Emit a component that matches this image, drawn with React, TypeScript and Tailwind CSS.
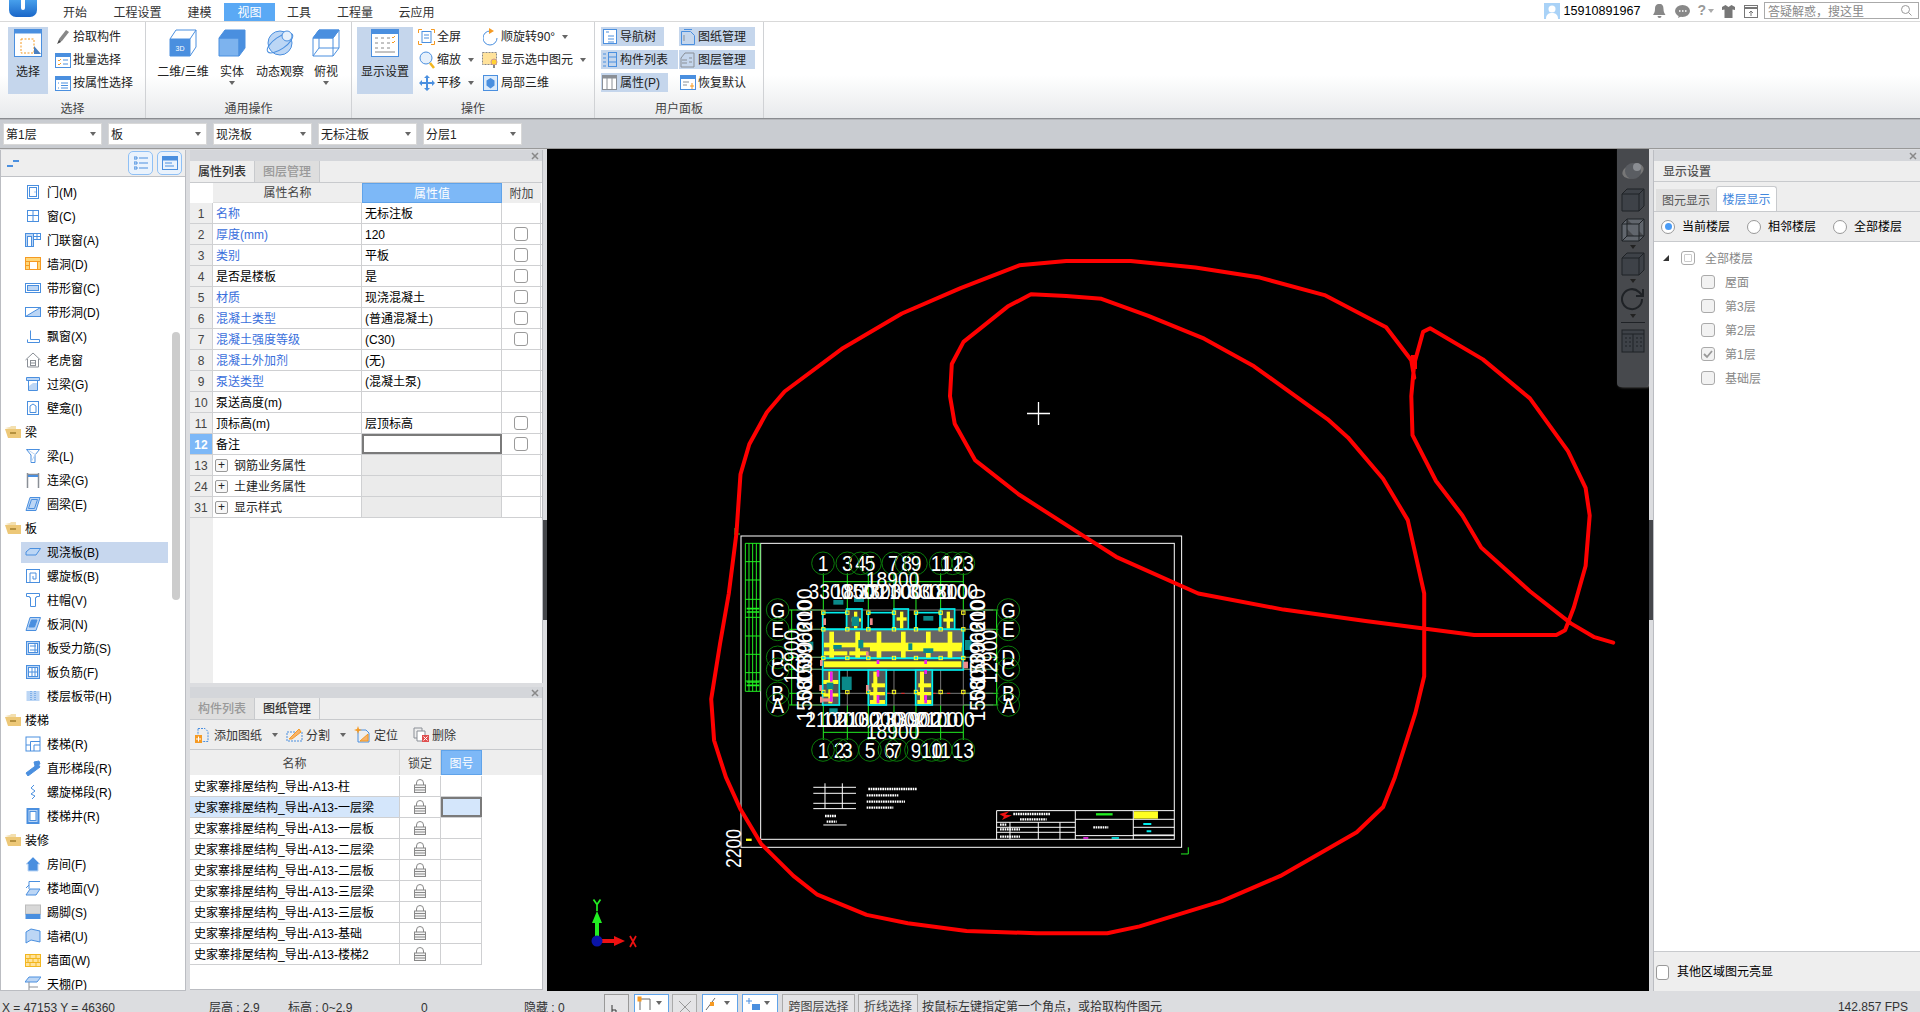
import React from "react";

const B = "#4a8fdf";
const L = "#bcd6f5";
const O = "#f59a23";
const G = "#8a8f96";

function S({ s = 16, vb = "0 0 16 16", children }: { s?: number; vb?: string; children?: React.ReactNode }) {
  return (
    <svg width={s} height={s} viewBox={vb} fill="none" stroke={B} strokeWidth="1" className="shrink-0">
      {children}
    </svg>
  );
}

const navIcons: Record<string, React.ReactNode> = {
  door: <><rect x="2.5" y="1.5" width="11" height="13" /><rect x="4.5" y="3.5" width="7" height="9" /><path d="M9.5 8h1" /></>,
  win: <><rect x="2.5" y="2.5" width="11" height="11" /><path d="M8 2.5v11M2.5 7.5h11" /></>,
  doorwin: <><rect x="0.5" y="1.5" width="8" height="13" fill={L} /><rect x="2.5" y="4.5" width="4" height="10" fill="#fff" /><rect x="8.5" y="1.5" width="7" height="6" /><path d="M12 1.5v6M8.5 4.5h7" /></>,
  hole: <><rect x="0.5" y="1.5" width="15" height="12" fill="#ffd778" stroke={O} /><rect x="4.5" y="5.5" width="8" height="8" fill="#fff" stroke={O} /><path d="M0.5 5.5h15M0.5 9.5h4" stroke={O} /></>,
  strip: <><rect x="0.5" y="3.5" width="15" height="9" /><rect x="2.5" y="5.5" width="11" height="5" fill={L} /></>,
  striphole: <><rect x="0.5" y="3.5" width="15" height="9" /><path d="M0.5 12.5L15.5 3.5V12.5Z" fill={L} /></>,
  bay: <path d="M5.5 2.5v9h9M2.5 11.5v3h12v-3" />,
  dormer: <g stroke={G}><path d="M0.5 8L8 1l7.5 7M2.5 7v8h11V7" /><rect x="5.5" y="8.5" width="5" height="5" /><path d="M5.5 11h5" /></g>,
  lintel: <><path d="M1.5 1.5h13v3h-13z" fill={L} /><path d="M3.5 4.5v10h9v-10" /><path d="M4 14V10l4-3h4v7z" fill={L} stroke="none" /></>,
  niche: <><rect x="2.5" y="1.5" width="11" height="13" /><path d="M5 12.5V6l3-2 3 2v6.5z" fill="#fff" /></>,
  beam: <><path d="M1.5 1.5h13L10 7v7.5H6V7z" /><path d="M3 2l8 5M6 14l4-7" stroke={L} /></>,
  lbeam: <g stroke={G} strokeWidth="1.5"><path d="M2.5 1v15M13.5 1v15" /><path d="M2 2.5h12" /><rect x="3" y="3" width="10" height="2" fill={B} stroke="none" /></g>,
  ring: <path d="M5 1.5h10L11 14.5H1zM6.5 3.5h6L9.5 12.5h-6z" fill={L} />,
  slab: <path d="M5 4.5h10.5L11 11H1V8z" fill={L} />,
  spiral: <><rect x="1.5" y="1.5" width="13" height="13" /><path d="M5 14V5h6v6H8V8" /></>,
  cap: <path d="M1.5 1.5h13v3h-3v1h-1v9h-5v-9h-1v-1h-3z" />,
  slabhole: <><path d="M5 1.5h10.500L11 14.500H1z" fill={L} /><path d="M6.500 4h5.500l-2.500 7H4z" fill={B} /></>,
  rebar: <><rect x="1.5" y="1.5" width="13" height="13" fill={L} /><rect x="3.5" y="3.5" width="9" height="9" fill="#fff" /><path d="M5 6h6M5 10h7M10 4v8" /></>,
  rebarneg: <><rect x="1.5" y="1.5" width="13" height="13" fill={L} /><rect x="3.5" y="3.5" width="9" height="9" fill="#fff" /><path d="M7 4v8M10 4v8M4 8h8" /></>,
  band: <><rect x="1.5" y="3" width="13" height="10" fill={L} stroke="none" /><path d="M6 3v10M10 3v10" strokeDasharray="1 1" /></>,
  stair: <><rect x="1" y="1" width="14" height="14" fill="none" /><path d="M5.5 15V5.5H15M9 15V9h6" /><path d="M1 9h4" /></>,
  flight: <path d="M1 13l12-9 2 3-12 9z M9 2l5-1 1 3-5 2z" fill={B} />,
  spiralf: <path d="M9 1l-3 3 4 3-4 3 4 2-3 3" />,
  well: <><rect x="2.5" y="1" width="11" height="14" strokeWidth="2" fill={L} /><rect x="5" y="3.5" width="6" height="9" fill="#fff" /></>,
  room: <path d="M8 1L1 8h2v7h10V8h2z" fill={B} stroke={L} />,
  floor: <><path d="M4 9V1.5h11M1 8l3-3" /><path d="M5 9h10l-4 6H1z" fill={L} /></>,
  skirt: <><rect x="0.5" y="1" width="15" height="9" fill="#d8d8d8" stroke="#bbb" /><rect x="0.5" y="10" width="15" height="5" fill={B} stroke="none" /></>,
  dado: <path d="M1 4l5-3 9 2v11l-9-2-5 3z" fill={L} />,
  wall: <><rect x="0.5" y="2.5" width="15" height="12" fill="#ffe29a" stroke="#f2b61f" /><path d="M0.5 6.5h15M0.5 10.5h15M5 2.5v4M11 2.5v4M3 6.5v4M8 6.5v4M13 6.5v4M5 10.5v4M11 10.5v4" stroke="#f2b61f" /></>,
  ceil: <><path d="M4 1h12l-4 5H0z" fill={L} /><path d="M4 6v9M4 11h9" stroke={G} /></>,
};

const navRows: [string, string?][] = [
  ["门(M)", "door"], ["窗(C)", "win"], ["门联窗(A)", "doorwin"], ["墙洞(D)", "hole"], ["带形窗(C)", "strip"], ["带形洞(D)", "striphole"], ["飘窗(X)", "bay"], ["老虎窗", "dormer"], ["过梁(G)", "lintel"], ["壁龛(I)", "niche"],
  ["梁"], ["梁(L)", "beam"], ["连梁(G)", "lbeam"], ["圈梁(E)", "ring"],
  ["板"], ["现浇板(B)", "slab"], ["螺旋板(B)", "spiral"], ["柱帽(V)", "cap"], ["板洞(N)", "slabhole"], ["板受力筋(S)", "rebar"], ["板负筋(F)", "rebarneg"], ["楼层板带(H)", "band"],
  ["楼梯"], ["楼梯(R)", "stair"], ["直形梯段(R)", "flight"], ["螺旋梯段(R)", "spiralf"], ["楼梯井(R)", "well"],
  ["装修"], ["房间(F)", "room"], ["楼地面(V)", "floor"], ["踢脚(S)", "skirt"], ["墙裙(U)", "dado"], ["墙面(W)", "wall"], ["天棚(P)", "ceil"],
];

function Folder() {
  return (
    <svg width="16" height="12" viewBox="0 0 16 12" className="shrink-0">
      <path d="M0 2l5-1 1-1h5v3H4z" fill="#f3dfae" />
      <path d="M0 3h16v9H3z" fill="#edc878" />
      <rect x="5" y="6" width="6" height="2" fill="#b5913f" />
    </svg>
  );
}

function Nav() {
  return (
    <div className="w-[186px] mt-px h-[841px] bg-white border-l border-r border-b border-[#bbbdc2] mr-1 flex flex-col overflow-hidden shrink-0">
      <div className="h-[27px] bg-[#eeeeee] border-b border-[#c0c2c6] flex items-center shrink-0 relative">
        <svg width="12" height="8" viewBox="0 0 12 8" className="ml-[6px]"><path d="M0 7h6M6 2h6" stroke={B} strokeWidth="2" /></svg>
        <div className="ml-auto mr-[3px] flex gap-[4px]">
          <div className="w-[25px] h-[24px] rounded-[5px] border border-[#8fc0f5] bg-[#eaf3fd] flex items-center justify-center">
            <svg width="14" height="14" viewBox="0 0 14 14" stroke={B} fill="none"><path d="M5 2h9M5 7h9M5 12h9" /><path d="M0 1h3v2H0zM0 6h3v2H0zM0 11h3v2H0z" /></svg>
          </div>
          <div className="w-[25px] h-[24px] rounded-[5px] border border-[#8fc0f5] bg-[#eaf3fd] flex items-center justify-center">
            <svg width="16" height="14" viewBox="0 0 16 14" stroke={B} fill="none"><rect x="0.5" y="0.5" width="15" height="13" /><rect x="0.5" y="0.5" width="15" height="3.5" fill={B} /><path d="M3 7h7M3 10h9" /></svg>
          </div>
        </div>
      </div>
      <div className="relative flex-1 pt-[3px] overflow-hidden">
        <div className="absolute left-[171px] top-[155px] w-2 h-[268px] rounded bg-[#cccccc]" />
        {navRows.map(([t, ic]) =>
          ic ? (
            <div key={t + ic} className="h-6 flex items-center">
              <div className={"ml-[20px] w-[147px] h-[21px] pl-1 flex items-center gap-[6px] " + (t === "现浇板(B)" ? "bg-[#c7d7ee]" : "")}>
                <S>{navIcons[ic]}</S>
                <span className="text-black pt-px">{t}</span>
              </div>
            </div>
          ) : (
            <div key={t} className="h-6 flex items-center pl-[4px] gap-1">
              <Folder />
              <span className="text-black pt-px">{t}</span>
            </div>
          )
        )}
      </div>
    </div>
  );
}

function Strip() {
  return (
    <div className="h-[11px] bg-[#d4d6da] flex items-center justify-end pr-[3px] shrink-0">
      <svg width="8" height="8" viewBox="0 0 8 8" stroke="#888" strokeWidth="1.5"><path d="M1 1l6 6M7 1L1 7" /></svg>
    </div>
  );
}

const propRows: [string, string, string, boolean, boolean?][] = [
  ["1", "名称", "无标注板", true, false],
  ["2", "厚度(mm)", "120", true, true],
  ["3", "类别", "平板", true, true],
  ["4", "是否是楼板", "是", false, true],
  ["5", "材质", "现浇混凝土", true, true],
  ["6", "混凝土类型", "(普通混凝土)", true, true],
  ["7", "混凝土强度等级", "(C30)", true, true],
  ["8", "混凝土外加剂", "(无)", true, false],
  ["9", "泵送类型", "(混凝土泵)", true, false],
  ["10", "泵送高度(m)", "", false, false],
  ["11", "顶标高(m)", "层顶标高", false, true],
  ["12", "备注", "", false, true],
];

function Check() {
  return <div className="w-[14px] h-[14px] rounded-[3px] border border-[#9a9a9a] bg-white" />;
}

function PropsPanel() {
  return (
    <div className="h-[533px] mt-px border-r border-[#bbbdc2] bg-white flex flex-col shrink-0">
      <Strip />
      <div className="h-[22px] bg-[#eeeeee] border-b border-[#c8cacd] flex shrink-0">
        <div className="w-[65px] h-full bg-[#eeeeee] border-r border-[#c8cacd] flex items-center justify-center font-medium text-[#333] pt-px">属性列表</div>
        <div className="w-[65px] h-full bg-[#dedede] border-r border-[#c8cacd] flex items-center justify-center text-[#999] font-medium pt-px">图层管理</div>
      </div>
      <div className="flex-1 flex flex-col bg-[linear-gradient(90deg,#eeeeee_23px,#ffffff_23px)]">
        <div className="h-[20px] grid grid-cols-[23px_149px_140px_39px] shrink-0">
          <div className="bg-white" />
          <div className="bg-[#eeeeee] flex items-center justify-center text-[#444] border-b border-[#ddd] pt-px">属性名称</div>
          <div className="bg-[#7db8f7] border border-[#5fa3ea] flex items-center justify-center text-white pt-px">属性值</div>
          <div className="bg-[#eeeeee] flex items-center justify-center text-[#444] pt-px">附加</div>
        </div>
        {propRows.map(([n, a, v, link, c]) => (
          <div key={n} className="h-[21px] grid grid-cols-[23px_149px_140px_39px] border-b border-[#cfd0d2] text-black">
            <div className={"flex items-center justify-center border-r border-[#cfd0d2] pt-[2px] " + (n === "12" ? "bg-[#7db8f7] text-white font-bold" : "bg-[#eeeeee] text-[#444]")}>{n}</div>
            <div className={"pl-[3px] pt-[2px] flex items-center border-r border-[#cfd0d2] " + (link ? "text-[#3a6fdc]" : "")}>{a}</div>
            <div className={"pl-[3px] pt-[2px] flex items-center " + (n === "12" ? "border-2 border-[#7a7a7a]" : "border-r border-[#cfd0d2]")}>{v}</div>
            <div className="flex items-center justify-center border-r border-[#cfd0d2]">{c ? <Check /> : null}</div>
          </div>
        ))}
        {[["13", "钢筋业务属性"], ["24", "土建业务属性"], ["31", "显示样式"]].map(([n, a]) => (
          <div key={n} className="h-[21px] grid grid-cols-[23px_149px_140px_39px] border-b border-[#cfd0d2] text-[#222]">
            <div className="flex items-center justify-center bg-[#eeeeee] border-r border-[#cfd0d2] text-[#444] pt-[2px]">{n}</div>
            <div className="pl-[2px] flex items-center gap-[6px] border-r border-[#cfd0d2]">
              <div className="w-[13px] h-[13px] rounded-[2px] border border-[#999] flex items-center justify-center text-[12px] leading-none bg-[#f7f7f7]">+</div>
              <span className="pt-[2px]">{a}</span>
            </div>
            <div className="bg-[#ebebeb] border-r border-[#cfd0d2]" />
            <div className="border-r border-[#cfd0d2]" />
          </div>
        ))}
      </div>
    </div>
  );
}

function Arrow({ c = "#666" }: { c?: string }) {
  return <svg width="6" height="4" viewBox="0 0 6 4" className="shrink-0"><path d="M0 0h6L3 4z" fill={c} /></svg>;
}

const drawings = ["柱", "一层梁", "一层板", "二层梁", "二层板", "三层梁", "三层板", "基础", "楼梯2"];

function Lock() {
  return (
    <svg width="12" height="14" viewBox="0 0 12 14" fill="none" stroke="#888">
      <path d="M2.5 6V4a3.5 3.5 0 017 0v2" />
      <rect x="0.5" y="6" width="11" height="7.5" fill="#f4f4f4" />
      <path d="M1 8.5h10M1 11h10" />
    </svg>
  );
}

function DrawingPanel() {
  return (
    <div className="h-[303px] mt-1 border-r border-b border-[#bbbdc2] bg-white flex flex-col shrink-0">
      <Strip />
      <div className="h-[22px] bg-[#eeeeee] border-b border-[#c8cacd] flex shrink-0">
        <div className="w-[65px] h-full bg-[#dedede] border-r border-[#c8cacd] flex items-center justify-center text-[#999] font-medium pt-px">构件列表</div>
        <div className="w-[65px] h-full border-r border-[#c8cacd] flex items-center justify-center font-medium text-[#333] pt-px">图纸管理</div>
      </div>
      <div className="h-[30px] bg-[#eeeeee] border-b border-[#c8cacd] flex items-center text-[#333] shrink-0 pl-[5px]">
        <svg width="15" height="16" viewBox="0 0 15 16" className="shrink-0" fill="none" stroke={B}><path d="M3 1.5h7l3 3v10H3z" strokeDasharray="2 1" /><rect x="0" y="8" width="7" height="8" fill={O} stroke="none" /><path d="M3.5 9.5v5M1 12h5" stroke="#fff" /></svg>
        <span className="ml-[4px] pt-[2px]">添加图纸</span>
        <span className="ml-[10px]"><Arrow /></span>
        <svg width="17" height="15" viewBox="0 0 17 15" className="ml-[8px] shrink-0" fill="none" stroke={B}><path d="M1 5h15v9H1z" strokeDasharray="2 1" /><path d="M3 12L13 2l2 3-9 7z" fill="#f6b26b" stroke={O} /></svg>
        <span className="ml-[3px] pt-[2px]">分割</span>
        <span className="ml-[10px]"><Arrow /></span>
        <svg width="17" height="17" viewBox="0 0 17 17" className="ml-[8px] shrink-0" fill="none" stroke={B}><path d="M4 4h8l3 3v9H4z" /><path d="M6 15L14 8v7z" fill="#f6b26b" stroke={O} /><path d="M4 0l1 3 3 1-3 1-1 3-1-3-3-1 3-1z" fill={O} stroke="none" /></svg>
        <span className="ml-[3px] pt-[2px]">定位</span>
        <svg width="16" height="15" viewBox="0 0 16 15" className="ml-[15px] shrink-0" fill="none" stroke={G}><path d="M1 1h8v10H1z" /><path d="M4 4h8v10H4z" fill="#fff" /><rect x="9" y="8" width="7" height="7" fill="#e05050" stroke="none" /><path d="M10.5 9.5l4 4M14.5 9.5l-4 4" stroke="#fff" /></svg>
        <span className="ml-[3px] pt-[2px]">删除</span>
      </div>
      <div className="h-[25px] grid grid-cols-[210px_41px_41px_1fr] bg-[#eeeeee] text-[#444] shrink-0">
        <div className="flex items-center justify-center border-r border-[#d8d8d8] pt-[2px]">名称</div>
        <div className="flex items-center justify-center border-r border-[#d8d8d8] pt-[2px]">锁定</div>
        <div className="flex items-center justify-center bg-[#7db8f7] border border-[#5fa3ea] text-white pt-[2px]">图号</div>
      </div>
      <div className="pt-px">
        {drawings.map((d, i) => (
          <div key={d} className="h-[21px] w-[292px] grid grid-cols-[210px_41px_41px] border-b border-[#cfd0d2] text-black">
            <div className={"pl-[4px] pt-[2px] flex items-center whitespace-nowrap border-r border-[#cfd0d2] " + (i === 1 ? "bg-[#d4e6fb]" : "")}>史家寨排屋结构_导出-A13-{d}</div>
            <div className="flex items-center justify-center border-r border-[#cfd0d2]"><Lock /></div>
            <div className={i === 1 ? "bg-[#d4e6fb] border-2 border-[#7a7a7a]" : "border-r border-[#cfd0d2]"} />
          </div>
        ))}
      </div>
    </div>
  );
}

const redPts: [number, number][] = [
  [1183, 300], [1178, 262], [1135, 190], [1030, 120], [920, 82], [810, 60], [700, 46], [590, 46], [510, 55], [410, 105], [310, 160], [210, 235], [110, 330], [80, 375], [50, 445], [35, 510], [28, 640], [15, 770], [0, 880], [-15, 1000], [-10, 1090], [10, 1170], [35, 1240], [70, 1315], [125, 1385], [165, 1425], [250, 1470], [320, 1488], [420, 1505], [540, 1510], [660, 1510], [715, 1495], [855, 1440], [955, 1385], [1085, 1290], [1130, 1235], [1150, 1170], [1185, 1030], [1200, 950], [1200, 770], [1172, 610], [1130, 520], [1070, 430], [1035, 390], [910, 275], [825, 215], [730, 165], [650, 128], [590, 122], [530, 118], [490, 145], [415, 222], [395, 270], [392, 340], [400, 400], [435, 480], [510, 555], [620, 645], [675, 690], [815, 770], [960, 805], [1100, 830], [1285, 860], [1425, 860], [1440, 850], [1455, 800], [1475, 710], [1482, 600], [1475, 540], [1445, 460], [1380, 345], [1300, 260], [1210, 192], [1198, 200], [1183, 270], [1178, 340], [1180, 425], [1220, 525], [1265, 600], [1297, 670], [1380, 765], [1450, 835], [1490, 865], [1522, 877],
];
const redLine = redPts.map(([x, y]) => `${(720 + x / 1.704).toFixed(1)},${(240 + y / 2.178).toFixed(1)}`).join(" ");

const GR = "#22ee22";
const DG = "#0a7a0a";
const axX = [280, 352, 415, 492, 558, 632, 700];
const axY = [240, 298, 382, 418, 490, 525];
const topB: [number, string][] = [[279, "1"], [352, "3"], [392, "4"], [420, "5"], [490, "7"], [530, "8"], [558, "9"], [632, "11"], [668, "12"], [700, "13"]];
const topB2: [number, string][] = [[279, "1"], [327, "2"], [352, "3"], [420, "5"], [478, "6"], [500, "7"], [558, "9"], [605, "10"], [632, "11"], [700, "13"]];
const sideB: [number, string][] = [[240, "G"], [298, "E"], [382, "D"], [418, "C"], [490, "B"], [525, "A"]];

function CadText({ x, y, t, rot }: { x: number; y: number; t: string; rot?: boolean }) {
  return (
    <text
      transform={`translate(${x} ${y})${rot ? " rotate(-90)" : ""} scale(0.85 1)`}
      textAnchor="middle"
      fontSize="68"
      fill="#fff"
      fontFamily="Liberation Sans"
    >
      {t}
    </text>
  );
}

function Bubble({ x, y, t }: { x: number; y: number; t: string }) {
  return (
    <>
      <circle cx={x} cy={y} r="34" stroke={DG} strokeWidth="3" fill="none" />
      <CadText x={x} y={y + 24} t={t} />
    </>
  );
}

const dimTop: [number, string][] = [[300, "3300"], [372, "1800"], [400, "1500"], [450, "3300"], [510, "2100"], [545, "3000"], [600, "3300"], [650, "1800"], [680, "2100"]];
const dimBot: [number, string][] = [[290, "2100"], [340, "1200"], [385, "2100"], [450, "3000"], [490, "2100"], [530, "3300"], [585, "900"], [620, "2100"], [670, "2100"]];
const dimSide: [number, string][] = [[510, "1500"], [450, "5800"], [400, "1500"], [340, "3900"], [275, "6300"], [240, "2100"]];

function Blueprint() {
  return (
    <g transform="translate(730 530) scale(0.3333)">
      <rect x="33" y="18" width="1322" height="934" stroke="#fff" strokeWidth="3" fill="none" />
      <rect x="92" y="40" width="1241" height="888" stroke="#fff" strokeWidth="3" fill="none" />
      <g stroke={GR} strokeWidth="3" fill="none">
        {[46, 57, 68, 79, 90].map((x) => <path key={x} d={`M${x} 40V484`} />)}
        {[40, 95, 150, 208, 262, 318, 373, 428, 453, 484].map((y) => <path key={y} d={`M46 ${y}H90`} />)}
        <path d="M50 236h38M50 246h38M50 456h38M50 466h38" strokeWidth="5" />
        <path d="M280 155H700M280 607H700M185 240V525M800 240V525" />
        {axX.map((x) => <path key={x} d={`M${x} 130V240M${x} 525V630`} />)}
        {axY.map((y) => <path key={y} d={`M178 ${y}H280M700 ${y}H805`} />)}
      </g>
      <g stroke="#777" strokeWidth="3" fill="none">
        {axX.map((x) => <path key={x} d={`M${x} 240V525`} />)}
        {axY.map((y) => <path key={y} d={`M200 ${y}H790`} />)}
      </g>
      <path d="M470 490H558M607 490H700M470 525h2" stroke="#ee2222" strokeWidth="3" strokeDasharray="10 34" />
      <g stroke="#00eeee" strokeWidth="5" fill="none">
        <rect x="278" y="298" width="422" height="86" fill="#666" />
        <rect x="278" y="248" width="72" height="50" />
        <rect x="350" y="237" width="46" height="60" fill="#444" />
        <rect x="415" y="248" width="75" height="50" />
        <rect x="492" y="237" width="43" height="60" fill="#444" />
        <rect x="558" y="248" width="72" height="50" />
        <rect x="632" y="237" width="42" height="60" fill="#444" />
        <rect x="278" y="385" width="422" height="35" fill="#444" />
        <rect x="278" y="420" width="50" height="105" fill="#555" />
        <rect x="415" y="420" width="54" height="105" fill="#555" />
        <rect x="557" y="420" width="50" height="105" fill="#555" />
      </g>
      <g fill="#ffff22">
        {[[282, 338, 414, 14], [282, 364, 70, 12], [358, 364, 55, 12], [420, 350, 275, 14], [282, 394, 412, 18], [298, 305, 14, 78], [376, 305, 14, 78], [440, 305, 14, 78], [513, 305, 14, 78], [588, 305, 14, 78], [653, 305, 14, 78], [365, 265, 28, 10], [372, 245, 10, 50], [500, 262, 30, 10], [510, 245, 10, 50], [640, 265, 30, 10], [650, 245, 10, 50], [295, 425, 12, 95], [280, 450, 45, 12], [425, 460, 40, 12], [430, 425, 12, 95], [420, 510, 45, 12], [565, 460, 38, 12], [570, 425, 12, 95], [562, 510, 42, 12], [280, 490, 45, 10], [420, 486, 45, 10], [562, 486, 42, 10]].map(([x, y, w, h], i) => <rect key={i} x={x} y={y} width={w} height={h} />)}
        {axX.flatMap((x) => [248, 298, 384, 486].map((y) => <rect key={x + "-" + y} x={x - 5} y={y - 5} width="10" height="10" fill="none" stroke="#ffff22" strokeWidth="3" />))}
      </g>
      <g fill="#0a8a8a">
        {[[310, 210, 30, 14], [372, 202, 30, 14], [580, 258, 30, 14], [580, 355, 30, 14], [705, 330, 20, 30], [335, 440, 30, 40], [298, 535, 25, 18], [290, 458, 20, 20], [235, 335, 15, 25], [310, 345, 25, 12], [385, 330, 15, 25], [365, 260, 22, 28], [535, 340, 12, 20]].map(([x, y, w, h], i) => <rect key={i} x={x} y={y} width={w} height={h} />)}
      </g>
      <g fill="#f08a8a">
        {[[280, 265, 8, 20], [420, 265, 8, 20], [270, 390, 8, 18], [268, 465, 8, 18], [408, 465, 8, 18], [270, 500, 8, 18], [700, 395, 14, 20], [408, 365, 8, 14], [278, 505, 30, 10]].map(([x, y, w, h], i) => <rect key={i} x={x} y={y} width={w} height={h} />)}
      </g>
      <g fill="#ee22ee">
        {[[300, 425, 8, 30], [300, 480, 8, 35], [440, 390, 8, 12], [440, 420, 8, 20], [440, 495, 8, 25], [583, 390, 8, 12], [583, 420, 8, 12], [583, 495, 8, 25]].map(([x, y, w, h], i) => <rect key={i} x={x} y={y} width={w} height={h} />)}
      </g>
      {topB.map(([x, t]) => <Bubble key={x} x={x} y={100} t={t} />)}
      {topB2.map(([x, t]) => <Bubble key={x} x={x} y={660} t={t} />)}
      {sideB.map(([y, t]) => <Bubble key={"l" + y} x={143} y={y} t={t} />)}
      {sideB.map(([y, t]) => <Bubble key={"r" + y} x={835} y={y} t={t} />)}
      <CadText x={488} y={172} t="18900" />
      <CadText x={488} y={626} t="18900" />
      {dimTop.map(([x, t], i) => <CadText key={"t" + i} x={x} y={206} t={t} />)}
      {dimBot.map(([x, t], i) => <CadText key={"b" + i} x={x} y={592} t={t} />)}
      {dimSide.map(([y, t], i) => <CadText key={"sl" + i} x={246} y={y} t={t} rot />)}
      {dimSide.map(([y, t], i) => <CadText key={"sr" + i} x={766} y={y} t={t} rot />)}
      <CadText x={206} y={380} t="12900" rot />
      <CadText x={802} y={380} t="12900" rot />
      <g stroke="#fff" strokeWidth="3" fill="none">
        <path d="M250 772H378M250 790H378M250 820H378M250 836H378M285 760V836M337 760V836" />
        <path d="M280 885H350" />
        <path d="M415 777H560M410 796H505M410 815H525M410 833H490M285 858H320M290 875H320" strokeWidth="7" strokeDasharray="5 2" />
        <path d="M800 842H1333M800 842V928M1036 842V928M1210 842V928M800 877H1036M800 892H1036M800 907H1036M1036 868H1333M1210 892H1333M1210 915H1333M1036 917H1333M925 877V928M990 877V928M840 877V928" />
        <path d="M850 852H960M870 868H950M1090 892H1135M810 884H830M810 898H870M810 920H870" strokeWidth="7" strokeDasharray="5 2" />
      </g>
      <path d="M808 852l30 -8 -12 10 20 2 -30 14 6 -10z" fill="#ee1111" />
      <rect x="1212" y="844" width="72" height="22" fill="#ffff22" />
      <path d="M1098 853h50" stroke={GR} strokeWidth="7" />
      <path d="M1240 882h24M1250 904h14" stroke="#00eeee" strokeWidth="6" />
      <path d="M1060 924h15" stroke="#ee22ee" strokeWidth="5" />
      <path d="M1145 924h22" stroke="#00eeee" strokeWidth="5" />
      <rect x="48" y="926" width="17" height="7" fill="#ffff22" />
      <path d="M1353 972h22V952" stroke={GR} strokeWidth="3" fill="none" />
    </g>
  );
}

function Canvas() {
  return (
    <div className="relative w-[1102px] h-full bg-black overflow-hidden shrink-0">
      <svg width="1102" height="842" viewBox="547 149 1102 842" className="absolute left-0 top-0">
        <Blueprint />
        <path d="M735 534h5M735 528v7" stroke={GR} fill="none" />
        <text transform="translate(741 868) rotate(-90) scale(0.8 1)" fill="#fff" fontSize="22" fontFamily="Liberation Sans">2200</text>
        <polyline points={redLine} fill="none" stroke="#ff0000" strokeWidth="4" strokeLinejoin="round" strokeLinecap="round" />
        <path d="M1414 355v14" stroke="#ff0000" strokeWidth="6" />
        <path d="M1038.5 402v23M1027 413.5h23" stroke="#fff" strokeWidth="1.3" />
        <path d="M597 941v-22" stroke="#22ee22" strokeWidth="4" />
        <path d="M597 911l-5 12h10z" fill="#22ee22" />
        <path d="M593.5 899.5l3.5 5 3.5-5M597 904v7" stroke="#22ee22" strokeWidth="1.7" fill="none" />
        <path d="M597 941h20" stroke="#ee1111" strokeWidth="4" />
        <path d="M625 941l-11-5v10z" fill="#ee1111" />
        <path d="M630 936l6 11M636 936l-6 11" stroke="#ee1111" strokeWidth="1.7" />
        <circle cx="597" cy="941" r="5.5" fill="#0a14a8" />
      </svg>
      <div className="absolute right-0 top-0 w-[32px] h-[238px] bg-[#47494d] rounded-b shadow-[2px_0_3px_#888] flex flex-col items-center pt-[10px]">
        <svg width="24" height="24" viewBox="0 0 24 24"><ellipse cx="12" cy="12" rx="11" ry="7" fill="#777" transform="rotate(-20 12 12)" /><circle cx="12" cy="12" r="8" fill="#5a5d62" /><circle cx="16" cy="8" r="4" fill="#8a8d92" /></svg>
        <svg width="24" height="24" viewBox="0 0 24 24" className="mt-[5px]" stroke="#1f2226" fill="#3e4248"><path d="M1 6l5-5h17v17l-5 5H1zM1 6h17v17M18 6l5-5" /></svg>
        <svg width="24" height="24" viewBox="0 0 24 24" className="mt-[6px]" stroke="#1f2226" fill="#61666d"><path d="M1 6l5-5h17v17l-5 5H1zM1 6h17v17M18 6l5-5M6 1v17h17M1 23l5-5" /></svg>
        <div className="mt-[3px]"><Arrow c="#222" /></div>
        <svg width="24" height="24" viewBox="0 0 24 24" className="mt-[3px]" stroke="#1f2226" fill="#3e4248"><path d="M1 6l5-5h17v17l-5 5H1zM1 6h17v17M18 6l5-5" /></svg>
        <div className="mt-[3px]"><Arrow c="#222" /></div>
        <svg width="24" height="24" viewBox="0 0 24 24" className="mt-[4px]" stroke="#1f2226" strokeWidth="2" fill="none"><path d="M21 12a10 10 0 11-3-7l3 3M22 2v7h-7" /></svg>
        <div className="mt-[3px]"><Arrow c="#222" /></div>
        <div className="w-[24px] h-px bg-[#1f2226] mt-[4px]" />
        <svg width="24" height="24" viewBox="0 0 24 24" className="mt-[6px]" stroke="#1f2226" fill="#3e4248"><rect x="1" y="1" width="22" height="22" /><path d="M1 5h22M12 5v18M4 9h2M8 9h2M4 13h2M8 13h2M4 17h2M8 17h2M15 9h2M19 9h2M15 13h2M19 13h2M15 17h2M19 17h2" /></svg>
      </div>
    </div>
  );
}

function Splitter() {
  return (
    <div className="w-1 h-full flex flex-col items-center pt-[371px] shrink-0">
      <div className="w-1 h-[100px] bg-[#45474b]" />
    </div>
  );
}

function RightPanel() {
  const floors = ["屋面", "第3层", "第2层", "第1层", "基础层"];
  return (
    <div className="w-[267px] h-[842px] mt-px flex flex-col bg-white border-l border-[#bbbdc2] shrink-0">
      <Strip />
      <div className="h-[21px] bg-[#eeeeee] border-b border-[#c8cacd] flex items-center pl-[9px] pt-[2px] text-[#555] font-medium shrink-0">显示设置</div>
      <div className="h-[30px] bg-[#eeeeee] border-b border-[#c8cacd] flex items-end pl-[2px] shrink-0">
        <div className="w-[60px] h-[22px] bg-[#e0e0e0] flex items-center justify-center text-[#555] pt-[2px]">图元显示</div>
        <div className="w-[61px] h-[25px] bg-white border border-b-0 border-[#c8cacd] rounded-t-[3px] flex items-center justify-center text-[#3f87dd] pt-[2px]">楼层显示</div>
      </div>
      <div className="h-[30px] bg-[#eeeeee] border-b border-[#c8cacd] flex items-center pl-[7px] text-black shrink-0">
        <div className="w-[14px] h-[14px] rounded-full border border-[#999] bg-white flex items-center justify-center"><div className="w-[7px] h-[7px] rounded-full bg-[#4a9bf5]" /></div>
        <span className="ml-[7px] w-[51px] pt-px">当前楼层</span>
        <div className="ml-[14px] w-[14px] h-[14px] rounded-full border border-[#999] bg-white" />
        <span className="ml-[7px] w-[51px] pt-px">相邻楼层</span>
        <div className="ml-[14px] w-[14px] h-[14px] rounded-full border border-[#999] bg-white" />
        <span className="ml-[7px] pt-px">全部楼层</span>
      </div>
      <div className="flex-1 pt-[4px] text-[#888]">
        <div className="h-6 flex items-center pl-[9px]">
          <svg width="6" height="6" viewBox="0 0 6 6"><path d="M6 0v6H0z" fill="#333" /></svg>
          <div className="ml-[12px] w-[14px] h-[14px] rounded-[3px] border border-[#aaa] bg-white flex items-center justify-center"><div className="w-[8px] h-[8px] border border-[#ccc] rounded-[1px]" /></div>
          <span className="ml-[10px] pt-[2px]">全部楼层</span>
        </div>
        {floors.map((f) => (
          <div key={f} className="h-6 flex items-center pl-[47px]">
            <div className="w-[14px] h-[14px] rounded-[3px] border border-[#aaa] bg-[#f2f2f2] flex items-center justify-center">
              {f === "第1层" ? <svg width="10" height="10" viewBox="0 0 10 10"><path d="M1 5l3 3 5-6" stroke="#999" strokeWidth="1.8" fill="none" /></svg> : null}
            </div>
            <span className="ml-[10px] pt-[2px]">{f}</span>
          </div>
        ))}
      </div>
      <div className="h-[41px] bg-[#eeeeee] border-t border-[#c8cacd] flex items-center pl-[2px] text-black shrink-0">
        <div className="w-[13px] h-[15px] rounded-[3px] border border-[#999] bg-white" />
        <span className="ml-[8px]">其他区域图元亮显</span>
      </div>
    </div>
  );
}

function RibbonGroup({ w, label, children }: { w: number; label: string; children: React.ReactNode }) {
  return (
    <div style={{ width: w }} className="h-full flex flex-col border-r border-[#d0d2d5] shrink-0">
      <div className="flex flex-1 pt-[5px]">{children}</div>
      <div className="h-[20px] pt-px flex items-center justify-center text-[#444]">{label}</div>
    </div>
  );
}

function Big({ w, ml, active, icon, label, arrow }: { w: number; ml: number; active?: boolean; icon: React.ReactNode; label: string; arrow?: boolean }) {
  return (
    <div style={{ width: w, marginLeft: ml }} className={"h-[67px] flex flex-col items-center pt-[2px] shrink-0 " + (active ? "bg-[#c5d6ec]" : "")}>
      <div className="h-[28px] flex items-center justify-center">{icon}</div>
      <div className="mt-[7px] h-[16px] leading-[16px] whitespace-nowrap text-[#222]">{label}</div>
      {arrow ? <div className="mt-[1px]"><Arrow /></div> : null}
    </div>
  );
}

function Small({ icon, label, arrow, bg, w }: { icon: React.ReactNode; label: string; arrow?: boolean; bg?: boolean; w?: number }) {
  return (
    <div className="h-[23px] flex items-center">
      <div style={w ? { width: w } : undefined} className={"h-[19px] flex items-center gap-[2px] whitespace-nowrap text-[#222] pr-[2px] " + (bg ? "bg-[#c5d6ec]" : "")}>
        <span className="w-[17px] flex justify-center shrink-0">{icon}</span>
        <span>{label}</span>
        {arrow ? <span className="ml-[5px]"><Arrow /></span> : null}
      </div>
    </div>
  );
}

function Cube3D() {
  return (
    <svg width="28" height="28" viewBox="0 0 28 28" fill="none" stroke={B}>
      <path d="M1 10h20v17H1z" fill={B} />
      <path d="M1 10l6-9h20v17l-6 9M21 10l6-9" />
      <text x="11" y="22" textAnchor="middle" fontSize="7" fill="#fff" stroke="none" fontFamily="Liberation Sans">3D</text>
    </svg>
  );
}

function Ribbon() {
  const ic = {
    pick: <svg width="14" height="16" viewBox="0 0 14 16"><path d="M2 14l1-4 7-9 3 2-7 9z" fill="#888" /><path d="M1 15l2-4 2 2z" fill="#444" /></svg>,
    batch: <svg width="16" height="16" viewBox="0 0 16 16" fill="none" stroke={B}><rect x="0.5" y="1.5" width="15" height="14" fill="#fff" /><rect x="0.5" y="1.5" width="15" height="3" fill={B} /><path d="M3 8l1 1 2-2M3 12l1 1 2-2" stroke={O} /><path d="M8 8h5M8 12h5" /></svg>,
    attr: <svg width="16" height="16" viewBox="0 0 16 16" fill="none" stroke={B}><rect x="0.5" y="1.5" width="15" height="14" fill="#fff" /><rect x="0.5" y="1.5" width="15" height="3" fill={B} /><path d="M6 8h7M6 10.5h7M6 13h7M3 8h1M3 13h1" /></svg>,
  };
  return (
    <div className="h-[97px] bg-[linear-gradient(180deg,#ffffff_55%,#e8eaec_100%)] border-b border-[#8a8c90] flex shrink-0">
      <RibbonGroup w={146} label="选择">
        <Big w={40} ml={8} active label="选择" icon={
          <svg width="28" height="28" viewBox="0 0 28 28" fill="none"><rect x="0.5" y="0.5" width="27" height="27" stroke={B} fill="#fff" /><rect x="0.5" y="0.5" width="27" height="4" fill={B} /><path d="M7 10h13v14H7z" stroke={O} strokeDasharray="2 1.5" /><path d="M20 17l7 8h-7z" fill="#4a7fc0" /></svg>
        } />
        <div className="ml-[6px] -mt-[2px]">
          <Small icon={ic.pick} label="拾取构件" />
          <Small icon={ic.batch} label="批量选择" />
          <Small icon={ic.attr} label="按属性选择" />
        </div>
      </RibbonGroup>
      <RibbonGroup w={206} label="通用操作">
        <Big w={54} ml={10} label="二维/三维" icon={<Cube3D />} />
        <Big w={30} ml={7} arrow label="实体" icon={<svg width="28" height="28" viewBox="0 0 28 28" stroke={B}><path d="M1 9h20v18H1z" fill="#7db3ee" /><path d="M1 9l6-8h20v18l-6 8V9z" fill="#4a8fdf" /></svg>} />
        <Big w={50} ml={8} label="动态观察" icon={<svg width="30" height="28" viewBox="0 0 30 28" fill="none" stroke={B}><circle cx="15" cy="14" r="12" fill="#bcd6f5" /><ellipse cx="15" cy="14" rx="15" ry="6" transform="rotate(-35 15 14)" /><circle cx="22" cy="7" r="5" fill="#e6f0fb" /></svg>} />
        <Big w={30} ml={6} arrow label="俯视" icon={<svg width="28" height="28" viewBox="0 0 28 28" fill="none" stroke={B}><path d="M1 9h20v18H1zM1 9l6-8h20v18l-6 8M21 9l6-8M7 1v18h20M1 27l6-8" /><path d="M1 9l6-8h20l-6 8z" fill={B} /></svg>} />
      </RibbonGroup>
      <RibbonGroup w={243} label="操作">
        <Big w={56} ml={5} active label="显示设置" icon={<svg width="28" height="28" viewBox="0 0 28 28" fill="none" stroke={B}><rect x="0.5" y="0.5" width="27" height="27" fill="#fff" /><rect x="0.5" y="0.5" width="27" height="4" fill={B} /><path d="M4 9h3M10 9h3M16 9h3M4 14h3M10 14h3M16 14h3M4 19h3M10 19h3M16 19h3M4 23h20" stroke="#888" /><path d="M21 8l1 1 2-2M21 13l1 1 2-2" stroke={O} /></svg>} />
        <div className="ml-[5px] w-[64px] -mt-[2px]">
          <Small label="全屏" icon={<svg width="17" height="16" viewBox="0 0 17 16" fill="none"><path d="M0.5 4V0.5H4M13 0.5h3.5V4M16.5 12v3.5H13M4 15.5H0.5V12" stroke={O} /><rect x="4" y="2.5" width="9" height="11" stroke={B} /><path d="M6 6h5M6 9h5" stroke={B} /></svg>} />
          <Small label="缩放" arrow icon={<svg width="16" height="18" viewBox="0 0 16 18" fill="none"><circle cx="7" cy="7" r="6" stroke={B} fill="#e6f0fb" /><path d="M11 12l4 5" stroke="#f2b61f" strokeWidth="2.5" /></svg>} />
          <Small label="平移" arrow icon={<svg width="16" height="16" viewBox="0 0 16 16" fill={B}><path d="M8 0l3 3H9v4h4V5l3 3-3 3V9H9v4h2l-3 3-3-3h2V9H3v2L0 8l3-3v2h4V3H5z" /></svg>} />
        </div>
        <div className="-mt-[2px]">
          <Small label="顺旋转90°" arrow icon={<svg width="15" height="18" viewBox="0 0 15 18" fill="none"><path d="M7 3a7 7 0 107 7" stroke={B} /><path d="M6 0l5 3-5 3z" fill={O} /></svg>} />
          <Small label="显示选中图元" arrow icon={<svg width="17" height="16" viewBox="0 0 17 16" fill="none"><rect x="0.5" y="0.5" width="14" height="12" fill="#ffe29a" stroke="#888" strokeDasharray="2 1" /><circle cx="12" cy="10" r="3" fill="#ffd233" stroke="#c99" /><path d="M11 13h2v3h-2z" fill="#888" /></svg>} />
          <Small label="局部三维" icon={<svg width="15" height="16" viewBox="0 0 15 16"><rect x="0.5" y="0.5" width="14" height="15" fill="#dcebfb" stroke={B} /><path d="M7.5 3l4 2.5v5l-4 3-4-3v-5z" fill={B} /></svg>} />
        </div>
      </RibbonGroup>
      <RibbonGroup w={169} label="用户面板">
        <div className="ml-[6px] -mt-[2px] w-[78px]">
          <Small bg w={63} label="导航树" icon={<svg width="14" height="15" viewBox="0 0 14 15" fill="none" stroke={B}><rect x="0.5" y="0.5" width="13" height="14" fill="#fff" /><path d="M3 3h3M5 7h6M5 10h6M5 13h6" /></svg>} />
          <Small bg w={77} label="构件列表" icon={<svg width="14" height="15" viewBox="0 0 14 15" fill="none" stroke={B}><path d="M0 2h3M0 6h3M0 10h3M0 14h3" /><rect x="5.5" y="0.5" width="8" height="14" /><path d="M6 5h7M6 10h7" /></svg>} />
          <Small bg w={67} label="属性(P)" icon={<svg width="15" height="15" viewBox="0 0 15 15" fill="none" stroke={G}><rect x="0.5" y="0.5" width="14" height="14" fill="#fff" /><rect x="0.5" y="0.5" width="14" height="2.5" fill={G} /><path d="M5 3v12M10 3v12" /></svg>} />
        </div>
        <div className="-mt-[2px]">
          <Small bg w={76} label="图纸管理" icon={<svg width="14" height="16" viewBox="0 0 14 16" fill="none" stroke={B}><path d="M0.5 2.5h9l4 4v9h-13z" /><path d="M3 0.5h8" /><path d="M3 6v6" stroke={G} /></svg>} />
          <Small bg w={76} label="图层管理" icon={<svg width="15" height="16" viewBox="0 0 15 16" fill="none" stroke={G}><path d="M5 1h9v14H1V6z" /><path d="M2 8h5M2 11h5M9 6h3M9 10h3" /></svg>} />
          <Small w={76} label="恢复默认" icon={<svg width="16" height="15" viewBox="0 0 16 15" fill="none" stroke={B}><rect x="0.5" y="0.5" width="15" height="14" fill="#fff" /><rect x="0.5" y="0.5" width="15" height="3" fill={B} /><path d="M3 7h6M3 10h4" stroke={G} /><path d="M10 11h4M12 8v6" stroke={O} /></svg>} />
        </div>
      </RibbonGroup>
    </div>
  );
}

function Title() {
  const tabs: [string, number][] = [["开始", 50], ["工程设置", 75], ["建模", 49], ["视图", 51], ["工具", 48], ["工程量", 64], ["云应用", 59]];
  return (
    <div className="h-[22px] bg-white border-b border-[#d9d9d9] flex shrink-0">
      <div className="ml-[9px] mr-[13px] w-[28px] h-[18px] -mt-[1px] rounded-b-[7px] bg-[linear-gradient(180deg,#4aa3ee,#1a66c8)] flex justify-center shrink-0">
        <div className="w-[4px] h-[11px] bg-white rounded-b-full" />
      </div>
      <div className="flex">
        {tabs.map(([t, w]) => (
          <div key={t} style={{ width: w }} className={"mt-[3px] h-[18px] leading-[21px] text-center " + (t === "视图" ? "bg-[#5aa9f5] text-white" : "text-[#333]")}>{t}</div>
        ))}
      </div>
      <div className="ml-auto flex items-start pt-[3px] shrink-0">
        <svg width="16" height="16" viewBox="0 0 16 16"><rect width="16" height="16" fill="#a9d2f7" /><circle cx="8" cy="6" r="3.5" fill="#fff" /><path d="M2 16c0-5 3-6 6-6s6 1 6 6z" fill="#fff" /></svg>
        <span className="ml-[3px] text-[12.6px] leading-[16px] text-black">15910891967</span>
        <svg width="13" height="14" viewBox="0 0 13 14" className="ml-[13px] mt-px" fill="#888"><path d="M6.5 0c3 0 4 2 4 5s1 4 2 6H0c1-2 2-3 2-6s1-5 4.5-5zM4.5 12h4a2 2 0 01-4 0z" /></svg>
        <svg width="15" height="13" viewBox="0 0 15 13" className="ml-[9px] mt-[2px]"><ellipse cx="7.5" cy="6" rx="7.5" ry="6" fill="#888" /><path d="M4 10l-1 3 4-2z" fill="#888" /><path d="M4 6h1.5M7 6h1.5M10 6h1.5" stroke="#fff" strokeWidth="1.5" /></svg>
        <span className="ml-[7px] text-[14px] leading-[15px] font-bold text-[#999]">?</span>
        <span className="ml-[2px] mt-[6px]"><Arrow c="#aaa" /></span>
        <svg width="13" height="13" viewBox="0 0 13 13" className="ml-[8px] mt-[2px]" fill="#777"><path d="M3.5 0L0 2v3l2.5-.5V13h8V4.500L13 5V2L9.500 0 6.500 2z" /></svg>
        <svg width="14" height="13" viewBox="0 0 14 13" className="ml-[9px] mt-[2px]" fill="none" stroke="#777"><rect x="0.500" y="0.500" width="13" height="12" /><path d="M0.500 3h13" strokeWidth="2" /><path d="M7 11V6M5 8l2-2 2 2" /></svg>
        <div className="ml-[6px] mr-px w-[155px] h-[17px] -mt-[1px] border border-[#aaa] bg-white flex items-center pl-[3px] pr-[6px] text-[#888]">
          <span className="pt-[2px]">答疑解惑，搜这里</span>
          <svg width="11" height="11" viewBox="0 0 11 11" className="ml-auto" fill="none" stroke="#999"><circle cx="4.500" cy="4.500" r="4" /><path d="M7.500 7.500l3 3" /></svg>
        </div>
      </div>
    </div>
  );
}

function Toolbar() {
  const sel = ["第1层", "板", "现浇板", "无标注板", "分层1"];
  return (
    <div className="h-[30px] bg-[#c9ccd1] border-t border-[#b5b7bb] border-b border-b-[#999] flex items-center gap-[6px] pl-[3px] shrink-0">
      {sel.map((s) => (
        <div key={s} className="w-[99px] h-[22px] bg-white border border-[#d8d8d8] flex items-center pl-[2px] pr-[5px] text-[#222]">
          <span className="pt-[2px]">{s}</span>
          <span className="ml-auto"><Arrow /></span>
        </div>
      ))}
    </div>
  );
}

function Status() {
  return (
    <div className="h-[21px] bg-[#dcdde0] flex items-start text-[#333] shrink-0 overflow-hidden">
      <div className="flex h-[27px] items-end">
        <div className="w-[209px] pl-[2px] leading-[20px]">X = 47153 Y = 46360</div>
        <div className="w-[79px] leading-[20px]">层高 : 2.9</div>
        <div className="w-[133px] leading-[20px]">标高 : 0~2.9</div>
        <div className="w-[103px] leading-[20px]">0</div>
        <div className="w-[80px] leading-[20px]">隐藏 : 0</div>
      </div>
      <div className="flex gap-[3px] mt-[3px] h-[26px]">
        <div className="w-[25px] bg-[#e4e4e6] border border-[#999] flex items-end justify-center"><svg width="14" height="14" viewBox="0 0 14 14" fill="none" stroke="#333"><path d="M2 0v10h10" /><path d="M2 5h4v5" /></svg></div>
        <div className="w-[35px] ml-[2px] bg-white border border-[#5fa3ea] flex pt-[1px] pl-[2px]"><svg width="16" height="14" viewBox="0 0 16 14" fill="none" stroke="#666"><path d="M3 3h10v11M3 3v11" /><rect x="0.500" y="0.500" width="4" height="5" fill={O} stroke="none" /></svg><span className="ml-[3px] mt-[5px]"><Arrow /></span></div>
        <div className="w-[25px] bg-[#e4e4e6] border border-[#aaa] flex items-center justify-center"><svg width="14" height="14" viewBox="0 0 14 14" stroke="#999"><path d="M1 1l12 12M13 1L1 13" /></svg></div>
        <div className="w-[36px] ml-[2px] bg-white border border-[#5fa3ea] flex pt-[1px] pl-[2px]"><svg width="16" height="14" viewBox="0 0 16 14" fill="none" stroke="#666"><path d="M1 14L10 2M1 14" /><rect x="5" y="6" width="4" height="4" fill={O} stroke="none" /></svg><span className="ml-[3px] mt-[5px]"><Arrow /></span></div>
        <div className="w-[36px] ml-[1px] bg-white border border-[#5fa3ea] flex pt-[1px] pl-[2px]"><svg width="16" height="14" viewBox="0 0 16 14" fill="none" stroke="#666"><path d="M1 5h6M4 2v6" stroke={B} /><rect x="7" y="8" width="8" height="6" fill={B} stroke="none" /></svg><span className="ml-[3px] mt-[5px]"><Arrow /></span></div>
        <div className="w-[73px] ml-[1px] bg-[#e4e4e6] border border-[#aaa] flex items-start justify-center pt-[4px] text-[#444]">跨图层选择</div>
        <div className="w-[60px] bg-[#e4e4e6] border border-[#aaa] flex items-start justify-center pt-[4px] text-[#444]">折线选择</div>
      </div>
      <div className="ml-[4px] mt-[8px] text-[#333] whitespace-nowrap">按鼠标左键指定第一个角点，或拾取构件图元</div>
      <div className="ml-auto mr-[12px] mt-[8px] whitespace-nowrap">142.857 FPS</div>
    </div>
  );
}

export default function App() {
  return (
    <div className="w-[1920px] h-[1012px] overflow-hidden bg-[#dcdde0] flex flex-col text-xs font-['Liberation_Sans','Noto_Sans_CJK_SC',sans-serif]">
      <Title />
      <Ribbon />
      <Toolbar />
      <div className="h-[842px] flex shrink-0">
        <Nav />
        <div className="w-[353px] flex flex-col shrink-0">
          <PropsPanel />
          <DrawingPanel />
        </div>
        <Splitter />
        <Canvas />
        <Splitter />
        <RightPanel />
      </div>
      <Status />
    </div>
  );
}
